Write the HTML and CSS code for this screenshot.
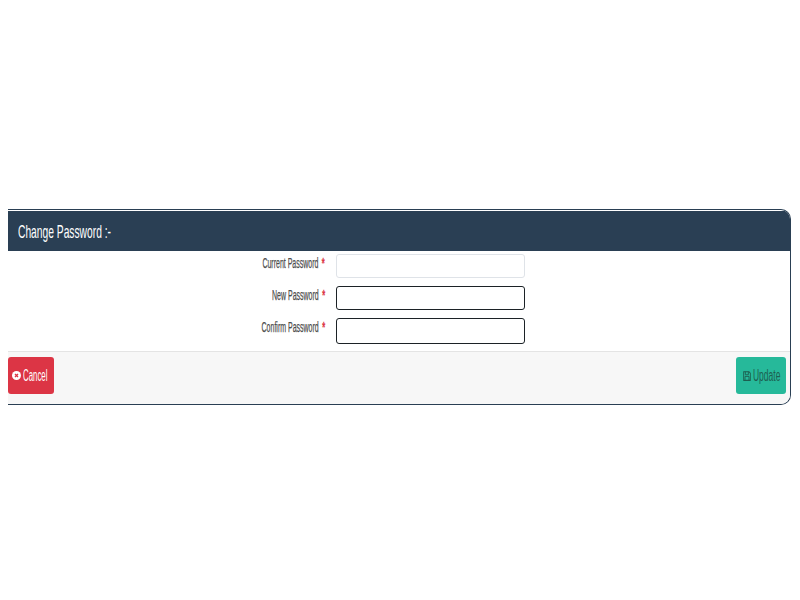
FILE: index.html
```html
<!DOCTYPE html>
<html lang="en">
<head>
	<meta charset="UTF-8">
	<meta name="viewport" content="width=device-width, initial-scale=1.0">
	<title>Change Password</title>
	<link rel="stylesheet" href="styles.css">
</head>
<body>
	<div class="panel">
		<div class="panel-head">
			<h2><span class="squeeze">Change Password :-</span></h2>
		</div>
		<form class="panel-body">
			<div class="row">
				<label><span class="squeeze-r">Current Password <b>*</b></span></label>
				<input type="password" class="field first">
			</div>
			<div class="row">
				<label><span class="squeeze-r">New Password <b>*</b></span></label>
				<input type="password" class="field">
			</div>
			<div class="row tall">
				<label><span class="squeeze-r">Confirm Password <b>*</b></span></label>
				<input type="password" class="field">
			</div>
		</form>
		<div class="panel-foot">
			<button type="button" class="btn btn-cancel">
				<svg class="icon" viewBox="0 0 12 12"><circle cx="6" cy="6" r="6" fill="#fff"/><path d="M4 4l4 4M8 4l-4 4" stroke="#dc3545" stroke-width="1.8"/></svg>
				<span class="squeeze">Cancel</span>
			</button>
			<button type="button" class="btn btn-update">
				<svg class="icon" viewBox="0 0 12 12" preserveAspectRatio="none"><path d="M1 .8h8l2 2v8.400h-10z" fill="none" stroke="#1d5f50" stroke-width="1.300"/><path d="M3.500 1v3.500h4.500v-3.500M3 11v-4.500h6v4.500" fill="none" stroke="#1d5f50" stroke-width="1.200"/></svg>
				<span class="squeeze">Update</span>
			</button>
		</div>
	</div>
</body>
</html>
```
FILE: styles.css
```css
body {
	margin: 0;
	padding: 209px 8px 0;
	background: #fff;
	font-family: "Liberation Sans", Arial, sans-serif;
}
.panel {
	width: 783px;
	height: 196px;
	box-sizing: border-box;
	border: 1px solid #2a3f54;
	border-left: 0;
	border-radius: 0 10px 10px 0;
	display: flex;
	flex-direction: column;
	overflow: hidden;
}
.panel-head {
	height: 40px;
	margin-top: 1px;
	background: #2a3f54;
	display: flex;
	align-items: center;
	padding: 2px 0 0 10px;
	box-sizing: border-box;
}
.panel-head h2 {
	margin: 0;
	font-size: 19px;
	font-weight: normal;
	color: #fff;
}
.squeeze {
	display: inline-block;
	transform: scaleX(.54);
	transform-origin: left center;
	white-space: nowrap;
}
.squeeze-r {
	display: inline-block;
	transform: scaleX(.5);
	transform-origin: right center;
	white-space: nowrap;
}
.panel-body {
	flex: 1;
	padding-top: 3px;
	display: flex;
	flex-direction: column;
	gap: 8px;
}
.row {
	display: grid;
	grid-template-columns: 317px 189px;
	column-gap: 11px;
	height: 24px;
}
.row.tall {
	height: 26px;
}
.row label {
	text-align: right;
	font-size: 14px;
	color: #4d4d4d;
	-webkit-text-stroke: .25px #4d4d4d;
	line-height: 18px;
}
.row label b {
	color: #dc3545;
	-webkit-text-stroke: .3px #dc3545;
	font-size: 15px;
	margin-left: 3px;
}
.field {
	box-sizing: border-box;
	width: 189px;
	height: 100%;
	margin: 0;
	background: #fff;
	border: 1px solid #1c2226;
	border-radius: 3px;
	outline: 0;
}
.field.first {
	border-color: #dfe3e8;
}
.panel-foot {
	height: 53px;
	box-sizing: border-box;
	background: #f7f7f7;
	border-top: 1px solid #e4e4e4;
	padding: 5px 4px 0 0;
	display: flex;
	justify-content: space-between;
	align-items: flex-start;
}
.btn {
	height: 37px;
	border: 0;
	border-radius: 3px;
	padding: 0 0 0 4px;
	display: flex;
	align-items: center;
	gap: 2px;
	font-family: inherit;
	font-size: 16px;
	overflow: visible;
}
.btn-cancel {
	width: 46px;
	background: #dc3545;
	color: #fff;
}
.btn-cancel .squeeze {
	transform: scaleX(.49);
}
.btn-update {
	width: 50px;
	padding-left: 7px;
	background: #26b99a;
	color: #1d5f50;
}
.btn-update .squeeze {
	transform: scaleX(.53);
}
.icon {
	width: 9px;
	height: 9px;
	flex: none;
}
.btn-update .icon {
	width: 8px;
	height: 10px;
}
```
